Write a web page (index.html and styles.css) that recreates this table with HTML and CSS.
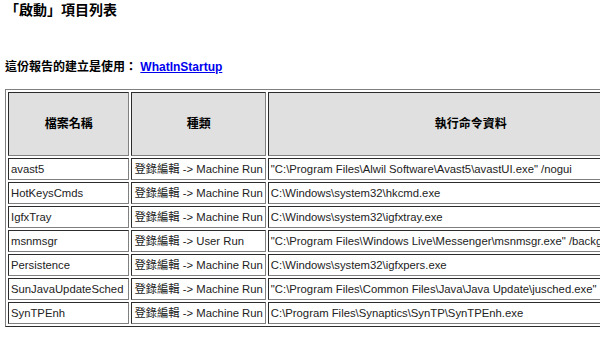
FILE: index.html
```html
<!DOCTYPE html>
<html>
<head>
<meta charset="utf-8">
<link rel="stylesheet" href="styles.css">
</head>
<body>
<h3 class="title">「啟動」項目列表</h3>
<h4 class="credit">這份報告的建立是使用： <a class="link" href="#">WhatInStartup</a></h4>
<table class="report">
<tr class="head">
<th class="c1">檔案名稱</th>
<th class="c2">種類</th>
<th class="c3">執行命令資料</th>
<th class="c4">狀態</th>
</tr>
<tr><td class="n">avast5</td><td>登錄編輯 -&gt; Machine Run</td><td>"C:\Program Files\Alwil Software\Avast5\avastUI.exe" /nogui</td><td>Enabled</td></tr>
<tr><td class="n">HotKeysCmds</td><td>登錄編輯 -&gt; Machine Run</td><td>C:\Windows\system32\hkcmd.exe</td><td>Enabled</td></tr>
<tr><td class="n">IgfxTray</td><td>登錄編輯 -&gt; Machine Run</td><td>C:\Windows\system32\igfxtray.exe</td><td>Enabled</td></tr>
<tr><td class="n">msnmsgr</td><td>登錄編輯 -&gt; User Run</td><td>"C:\Program Files\Windows Live\Messenger\msnmsgr.exe" /background</td><td>Enabled</td></tr>
<tr><td class="n">Persistence</td><td>登錄編輯 -&gt; Machine Run</td><td>C:\Windows\system32\igfxpers.exe</td><td>Enabled</td></tr>
<tr><td class="n">SunJavaUpdateSched</td><td>登錄編輯 -&gt; Machine Run</td><td>"C:\Program Files\Common Files\Java\Java Update\jusched.exe"</td><td>Enabled</td></tr>
<tr><td class="n">SynTPEnh</td><td>登錄編輯 -&gt; Machine Run</td><td>C:\Program Files\Synaptics\SynTP\SynTPEnh.exe</td><td>Enabled</td></tr>
</table>
</body>
</html>
```
FILE: styles.css
```css
html {
  overflow: hidden;
}
body {
  margin: 0;
  padding: 0 5px;
  font-family: "Liberation Sans", "Noto Sans CJK TC", sans-serif;
  color: #000;
  background: #fff;
}
.title {
  margin: 0;
  font-size: 14px;
  line-height: 20px;
  font-weight: bold;
}
.credit {
  margin: 39px 0 14px 0;
  font-size: 12px;
  line-height: 16px;
  font-weight: bold;
}
.link {
  color: #0000ee;
  text-decoration: underline;
}
.report {
  border-collapse: separate;
  border-spacing: 2px;
  border: 1px outset #808080;
  font-size: 11.3px;
  white-space: nowrap;
}
.report th,
.report td {
  border: 1px inset #808080;
  padding: 2px 2px;
  line-height: 16px;
  text-align: left;
  vertical-align: middle;
  color: #222;
}
.report td {
  height: 16px;
}
.report td.n {
  padding-right: 5px;
}
.head th {
  background: #e0e0e0;
  font-weight: bold;
  text-align: center;
  height: 58px;
  font-size: 12px;
  color: #000;
}
.c3 {
  min-width: 400px;
}
```
